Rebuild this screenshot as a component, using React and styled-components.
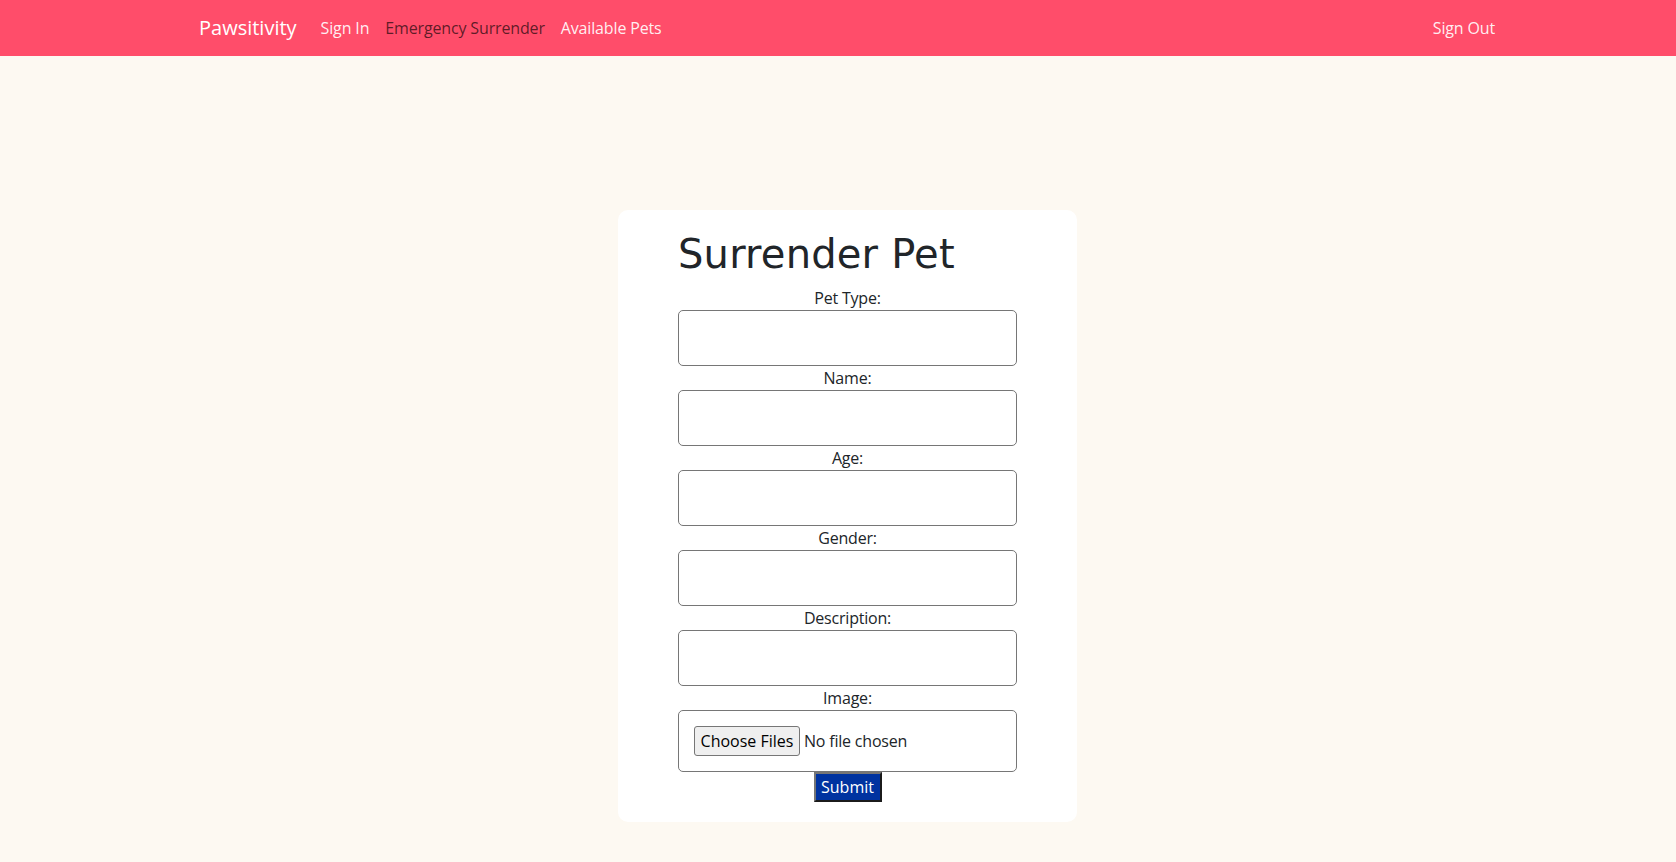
import React from "react";
import styled, { createGlobalStyle } from "styled-components";

const GlobalStyle = createGlobalStyle`
  * { box-sizing: border-box; }
  body {
    margin: 0;
    background: #fdf9f2;
    font-family: "Open Sans", "Noto Sans", sans-serif;
    color: #212529;
  }
`;

const NavBar = styled.nav`
  height: 56px;
  background: #ff4d6a;
  display: flex;
  align-items: center;
  padding: 0 173px 0 199px;
`;

const Brand = styled.a`
  font-size: 20px;
  line-height: 30px;
  color: #fff;
  text-decoration: none;
  margin-right: 16px;
`;

const NavList = styled.div`
  display: flex;
  align-items: center;
  flex: 1;
`;

const NavLink = styled.a`
  font-size: 16px;
  line-height: 24px;
  letter-spacing: -0.15px;
  padding: 8px;
  text-decoration: none;
  color: ${(p) => (p.$active ? "rgba(0,0,0,0.65)" : "rgba(255,255,255,0.92)")};
`;

const Main = styled.main`
  display: flex;
  justify-content: center;
  padding: 154px 0 30px 19px;
`;

const Card = styled.section`
  width: 459px;
  background: #fff;
  border-radius: 10px;
  padding: 20px 60px;
`;

const Title = styled.h1`
  margin: 0 0 8px;
  font-family: "DejaVu Sans", "Open Sans", sans-serif;
  font-weight: 400;
  font-size: 40px;
  line-height: 48px;
  letter-spacing: 0.2px;
  color: #212529;
`;

const Form = styled.form`
  display: flex;
  flex-direction: column;
  text-align: center;
`;

const Label = styled.label`
  display: block;
  font-size: 16px;
  line-height: 24px;
  letter-spacing: -0.2px;
  color: #212529;
`;

const Input = styled.input`
  display: block;
  width: 100%;
  height: ${(p) => (p.type === "file" ? "62px" : "56px")};
  border: 1px solid #767676;
  border-radius: 5px;
  padding: 15px;
  font-family: "Open Sans", sans-serif;
  font-size: 16px;
  line-height: 24px;
  letter-spacing: -0.2px;
  color: #212529;
  background: #fff;
  text-align: left;

  &::file-selector-button {
    width: 106px;
    height: 30px;
    padding: 0;
    margin-right: 4px;
    background: #efefef;
    border: 1px solid #767676;
    border-radius: 3px;
    font: inherit;
    color: #000;
  }
`;

const SubmitButton = styled.button`
  align-self: center;
  width: 68px;
  height: 30px;
  padding: 0;
  background: #0033a0;
  color: #fff;
  font-family: "Open Sans", sans-serif;
  font-size: 16px;
  line-height: 24px;
  border: 2px solid;
  border-color: #767676 #1b1b1b #1b1b1b #767676;
`;

const fields = [
  { id: "type", label: "Pet Type:" },
  { id: "name", label: "Name:" },
  { id: "age", label: "Age:" },
  { id: "gender", label: "Gender:" },
  { id: "description", label: "Description:" },
];

export default function App() {
  return (
    <>
      <GlobalStyle />
      <NavBar>
        <Brand href="#">Pawsitivity</Brand>
        <NavList>
          <NavLink href="#">Sign In</NavLink>
          <NavLink href="#" $active>
            Emergency Surrender
          </NavLink>
          <NavLink href="#">Available Pets</NavLink>
        </NavList>
        <NavLink href="#">Sign Out</NavLink>
      </NavBar>
      <Main>
        <Card>
          <Title>Surrender Pet</Title>
          <Form onSubmit={(e) => e.preventDefault()}>
            {fields.map((f) => (
              <React.Fragment key={f.id}>
                <Label htmlFor={f.id}>{f.label}</Label>
                <Input id={f.id} type="text" />
              </React.Fragment>
            ))}
            <Label htmlFor="image">Image:</Label>
            <Input id="image" type="file" multiple />
            <SubmitButton type="submit">Submit</SubmitButton>
          </Form>
        </Card>
      </Main>
    </>
  );
}
